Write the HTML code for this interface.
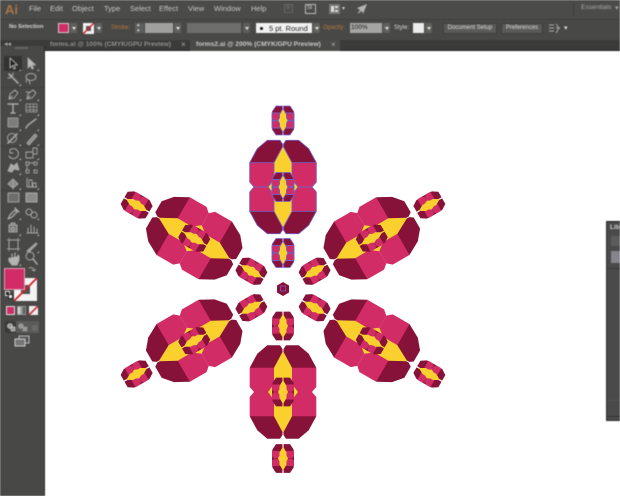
<!DOCTYPE html>
<html><head><meta charset="utf-8"><style>
html,body{margin:0;padding:0;width:620px;height:496px;overflow:hidden;background:#fff}
#r{position:relative;width:620px;height:496px;overflow:hidden;font-family:"Liberation Sans",sans-serif}
.a{position:absolute}
.t{position:absolute;white-space:nowrap;line-height:1;color:#cfcfcd}
.m{font-size:7.5px;top:5px;color:#c6c6c4}
.c{font-size:6px;top:25px;color:#d6d6d4}
.o{color:#b8793a;font-size:6px;top:25px}
.b{position:absolute;top:23px;height:10px}
.d{position:absolute;top:23px;height:10px;width:7px;background:#5f5f5d}
.d:after{content:"";position:absolute;left:2px;top:4px;border:2px solid transparent;border-top:3px solid #e4e4e4}
.btn{position:absolute;top:23px;height:9px;background:#5a5a58;border:1px solid #3e3e3c;color:#dcdcda;font-size:6px;line-height:9px;text-align:center;white-space:nowrap;box-sizing:content-box}
#chrome{filter:blur(.45px)}
#art{filter:blur(.3px)}
</style></head><body><div id="r">
<svg id="art" class="a" style="left:0;top:0" width="620" height="496" viewBox="0 0 620 496">
<defs>
<g id="q"><polygon fill="#871239" points="-33.3,-24.3 -25.7,-38.3 -15.7,-46.7 -3,-46.7 -.5,-43 -.5,-36 -7,-20 -20,-20"/><polygon fill="#d22c66" points="-33.3,-24.3 -8,-24.3 -8,-7 -13,0 -29,0 -33.3,-5"/></g>
<g id="mq"><polygon fill="#871239" points="-.6,-14.4 -7,-14.4 -10.6,-9 -11,0 -.6,0"/><polygon fill="#d22c66" points="-11,-7.5 -3,-7.5 -3,-1 -4,-.3 -9,-.3 -11,-2.5"/></g>
<g id="mini"><use href="#mq"/><use href="#mq" transform="scale(-1,1)"/><use href="#mq" transform="scale(1,-1)"/><use href="#mq" transform="scale(-1,-1)"/><polygon fill="#fad02e" points="0,-12 3.5,-6 3.5,-3 5,0 3.5,3 3.5,6 0,12 -3.5,6 -3.5,3 -5,0 -3.5,-3 -3.5,-6"/></g>
<g id="big"><use href="#q"/><use href="#q" transform="scale(-1,1)"/><use href="#q" transform="scale(1,-1)"/><use href="#q" transform="scale(-1,-1)"/><polygon fill="#fad02e" points="0,-41 9,-24.3 9,-8 15,0 9,8 9,24.3 0,41 -9,24.3 -9,8 -15,0 -9,-8 -9,-24.3"/><use href="#mini"/></g>
<g id="arm"><use href="#big" transform="translate(283,187)"/><use href="#mini" transform="translate(283,120.5)"/><use href="#mini" transform="translate(283,253)"/></g>
</defs>
<use href="#arm" transform="rotate(60 283 289.5)"/>
<use href="#arm" transform="rotate(120 283 289.5)"/>
<use href="#arm" transform="rotate(180 283 289.5)"/>
<use href="#arm" transform="rotate(240 283 289.5)"/>
<use href="#arm" transform="rotate(300 283 289.5)"/>
<g stroke="#7a5cc0" stroke-width=".9" stroke-linejoin="round"><use href="#arm"/></g>
<polygon fill="#871239" points="283,282 289,285.5 289,292.5 283,296 277,292.5 277,285.5"/>
<rect x="280.5" y="286" width="5" height="5" fill="none" stroke="#7a5cc0" stroke-width=".8"/>
</svg>

<div id="chrome">
<div class="a" style="left:0;top:0;width:620px;height:19px;background:#4b4b49"></div>
<div class="a" style="left:0;top:19px;width:620px;height:21px;background:#484846;border-top:1px solid #3f3f3d;box-sizing:border-box"></div>
<div class="a" style="left:0;top:40px;width:620px;height:11px;background:#3b3b39"></div>
<div class="a" style="left:45px;top:50px;width:575px;height:1px;background:#222"></div>
<div class="a" style="left:190px;top:40px;width:150px;height:11px;background:#4a4a48"></div>

<div class="t" style="left:5px;top:3px;font-size:13px;color:#a8764c;font-weight:bold">Ai</div>
<div class="t m" style="left:29px">File</div>
<div class="t m" style="left:50px">Edit</div>
<div class="t m" style="left:72px">Object</div>
<div class="t m" style="left:104px">Type</div>
<div class="t m" style="left:130px">Select</div>
<div class="t m" style="left:159px">Effect</div>
<div class="t m" style="left:188px">View</div>
<div class="t m" style="left:214px">Window</div>
<div class="t m" style="left:251px">Help</div>
<div class="a" style="left:284px;top:4px;width:9px;height:9px;border:1px solid #666;box-sizing:border-box"></div>
<div class="t" style="left:286px;top:6px;font-size:5px;color:#777">Br</div>
<div class="a" style="left:305px;top:4px;width:11px;height:10px;border:1px solid #bbb;box-sizing:border-box"></div>
<div class="t" style="left:307px;top:6px;font-size:5.5px;color:#ddd">St</div>
<div class="a" style="left:329px;top:4px;width:11px;height:10px;background:#777"></div>
<div class="a" style="left:331px;top:6px;width:3px;height:6px;background:#ddd"></div>
<div class="a" style="left:335px;top:6px;width:3px;height:2px;background:#ddd"></div>
<div class="a" style="left:335px;top:10px;width:3px;height:2px;background:#ddd"></div>
<div class="t" style="left:342px;top:6px;font-size:6px;color:#ccc">▾</div>
<svg class="a" style="left:354px;top:3px" width="14" height="13"><path d="M13 1L3 5l3 2-3 4 5-3 1 3z" fill="#b4b4b2"/></svg>
<div class="a" style="left:573px;top:2px;width:1px;height:14px;background:#3d3d3b"></div>
<div class="t" style="left:581px;top:5px;font-size:6.7px;color:#a9a9a7">Essentials</div>
<div class="t" style="left:615px;top:5px;font-size:7px;color:#aaa">▾</div>

<div class="t c" style="left:9px;font-weight:bold;font-size:5.7px">No Selection</div>
<div class="b" style="left:58px;width:11px;background:#d22c66;border:1px solid #ccc;box-sizing:border-box"></div>
<div class="d" style="left:70px"></div>
<svg class="a" style="left:83px;top:23px" width="11" height="11"><rect width="11" height="11" fill="#f2f2f2"/><rect x="3" y="3" width="5" height="5" fill="#555"/><path d="M0 11L11 0" stroke="#d2232a" stroke-width="1.500"/></svg>
<div class="d" style="left:95px"></div>
<div class="t o" style="left:111px">Stroke:</div>
<div class="b" style="left:135px;width:9px;background:#5f5f5d"></div>
<div class="t" style="left:137px;top:23px;font-size:5px;color:#ddd">▴</div>
<div class="t" style="left:137px;top:29px;font-size:5px;color:#ddd">▾</div>
<div class="b" style="left:145px;width:28px;background:#a0a09e"></div>
<div class="d" style="left:174px"></div>
<div class="b" style="left:187px;width:54px;background:#6e6e6c"></div>
<div class="d" style="left:243px;background:#5c5c5a"></div>
<div class="b" style="left:256px;width:56px;background:#f1f1f1"></div>
<div class="a" style="left:260px;top:27px;width:3px;height:3px;border-radius:50%;background:#111"></div>
<div class="t" style="left:269px;top:25px;font-size:7.5px;color:#222">5 pt. Round</div>
<div class="d" style="left:313px"></div>
<div class="t o" style="left:323px">Opacity:</div>
<div class="b" style="left:350px;width:32px;background:#a5a5a3"></div>
<div class="t" style="left:351px;top:25px;font-size:6.500px;color:#222">100%</div>
<div class="d" style="left:383px"></div>
<div class="t c" style="left:394px">Style:</div>
<div class="b" style="left:413px;width:11px;background:#ececec"></div>
<div class="d" style="left:425px"></div>
<div class="btn" style="left:443px;width:52px">Document Setup</div>
<div class="btn" style="left:501px;width:40px">Preferences</div>
<svg class="a" style="left:549px;top:23px" width="12" height="11" stroke="#aaa" fill="none"><path d="M0 2h5M0 5h5M0 8h5M7 1l3 4-3 5M7 5h4"/></svg>
<div class="t" style="left:564px;top:25px;font-size:7px;color:#ddd">▾</div>

<div class="t" style="left:4px;top:41px;font-size:7px;color:#aaa">◂◂</div>
<div class="t" style="left:50px;top:42px;font-size:6.6px;color:#8f8f8d;font-weight:bold">forms.ai @ 100% (CMYK/GPU Preview)</div>
<div class="t" style="left:181px;top:41px;font-size:8px;color:#aaa">×</div>
<div class="t" style="left:196px;top:42px;font-size:6.6px;color:#c9c9c7;font-weight:bold">forms2.ai @ 200% (CMYK/GPU Preview)</div>
<div class="t" style="left:331px;top:41px;font-size:8px;color:#aaa">×</div>

<div class="a" style="left:0;top:51px;width:44px;height:445px;background:#484846"></div>
<div class="a" style="left:0;top:46px;width:44px;height:5px;background:#484846"></div>
<div class="a" style="left:44px;top:46px;width:1px;height:450px;background:#2c2c2a"></div>
<div class="a" style="left:15px;top:47px;width:13px;height:2px;background:#666"></div>
<div class="a" style="left:4px;top:56px;width:18px;height:15px;background:#333331"></div>

<svg class="a" style="left:0;top:50px" width="44" height="310" viewBox="0 50 44 310" fill="none" stroke="#a8a8a6" stroke-width="1" stroke-linejoin="round" stroke-linecap="round">
<path d="M10 58v10l2.500-2.500 1.500 3.500 1.500-.7-1.500-3.300h3.500z" fill="#222"/>
<path d="M28 58v10l2.500-2.500 1.500 3.500 1.500-.7-1.500-3.300h3.500z" fill="#bbb"/>
<path d="M9 74l3 2-1 1zM12 77l6 6" stroke-width="1.600"/><path d="M8 78h2M13 73v2"/>
<ellipse cx="31" cy="77" rx="5" ry="3.500"/><path d="M29 80l1 4M27 79l-1 3"/>
<path d="M9 99l1-5 5-4 3 3-4 5zM9 99l3-3"/><path d="M27 99l1-5 5-4 3 3-4 5zM27 99l3-3M26 92h3"/>
<path d="M8 104h10M13 104v9M11 113h4" stroke-width="1.500"/>
<path d="M26 104h11v8H26zM26 107h11M26 110h11M30 104v8M33.500 104v8" stroke-width=".7"/>
<rect x="8" y="118" width="10" height="9" fill="#7d7d7b" stroke="#999"/>
<path d="M26 128l2-3 8-6" stroke-width="1.500"/>
<circle cx="12" cy="138" r="4.500"/><path d="M8 143l9-9" stroke-width="1.600"/>
<path d="M27 143l8-9 2 2-8 9z" fill="#888"/>
<path d="M10 150a5 5 0 1 1-1 6M10 150v3h3"/>
<path d="M26 152h7v6h-7zM33 148h4v6h-4z" stroke-width=".9"/>
<path d="M8 171l3-7 3 2 3-3 2 7-5-1-2 3z" fill="#aaa"/>
<path d="M26 162h3v3h-3zM34 162h3v3h-3zM26 170h3v3h-3zM34 170h3v3h-3zM29 163h5M27 165v5" stroke-dasharray="1.500 1"/>
<path d="M8 184l5-5 5 5-5 4zM13 182v7" fill="#888"/>
<path d="M27 178v9h10M29 187v-7h3v7M33 187v-4h3v4" stroke-width=".9"/>
<rect x="8" y="193" width="11" height="9" fill="#6d6d6b" stroke="#aaa" stroke-dasharray="1.500 1"/>
<rect x="26" y="193" width="11" height="9" fill="#8a8a88" stroke="#aaa"/>
<path d="M8 219l2-4 5-5 2 2-5 5zM15 208l4 4" stroke-width="1.300"/>
<circle cx="29" cy="212" r="3"/><circle cx="34" cy="215" r="3"/>
<path d="M9 232v-7h8v7zM11 225v-2h4v2" fill="#777"/><circle cx="13" cy="229" r="1.500"/>
<path d="M27 233h11M28 233v-5M31 233v-8M34 233v-6M37 233v-4" stroke-width="1"/>
<rect x="9" y="240" width="9" height="9"/><path d="M7 240h2M7 249h2M18 240h2M18 249h2M9 238v2M18 238v2M9 249v2M18 249v2" stroke-width=".7"/>
<path d="M27 251l9-8 1 1-8 8z" fill="#999"/>
<path d="M9 258v3l3 4h5l2-5v-4M12 258v-4M15 257v-4M18 258v-3" fill="#b5b5b3" stroke-width="1.200"/>
<circle cx="30" cy="256" r="4"/><path d="M33 259l4 5" stroke-width="1.600"/>
<path d="M29 268c3-1 5 0 5 3M34 271l-2-1M34 271l1.500-1.500" stroke-width=".9"/>
</svg>
<svg class="a" style="left:0;top:50px" width="44" height="230" viewBox="0 50 44 230" fill="#bbb">
<path d="M21 69v2h-2zM39 69v2h-2zM21 84v2h-2zM21 99v2h-2zM39 99v2h-2zM21 114v2h-2zM39 114v2h-2zM21 129v2h-2zM39 129v2h-2zM21 144v2h-2zM39 144v2h-2zM21 158v2h-2zM39 158v2h-2zM21 173v2h-2zM21 188v2h-2zM39 188v2h-2zM21 218v2h-2zM39 218v2h-2zM21 234v2h-2zM39 234v2h-2zM39 251v2h-2zM21 264v2h-2z"/>
</svg>
<div class="a" style="left:0;top:87px;width:44px;height:1px;background:#3f3f3d"></div>
<div class="a" style="left:0;top:146px;width:44px;height:1px;background:#3f3f3d"></div>
<div class="a" style="left:0;top:190px;width:44px;height:1px;background:#3f3f3d"></div>

<svg class="a" style="left:14px;top:278px" width="23" height="23"><rect x="0" y="0" width="23" height="23" fill="#f4f4f4"/><rect x="7" y="7" width="9" height="9" fill="#505050"/><path d="M0 23L23 0" stroke="#d2232a" stroke-width="1.800"/></svg>
<div class="a" style="left:4px;top:268px;width:21px;height:22px;background:#d22c66;border:1px solid #d9a0b6;box-sizing:border-box"></div>
<div class="a" style="left:5px;top:291px;width:5px;height:5px;background:#222;border:1px solid #ddd;box-sizing:border-box"></div>
<div class="a" style="left:8px;top:294px;width:5px;height:5px;background:#eee;border:1px solid #222;box-sizing:border-box"></div>

<div class="a" style="left:6px;top:306px;width:9px;height:9px;background:#d22c66;border:1px solid #ddd;box-sizing:border-box"></div>
<div class="a" style="left:17px;top:306px;width:9px;height:9px;background:linear-gradient(90deg,#eee,#444);border:1px solid #999;box-sizing:border-box"></div>
<svg class="a" style="left:29px;top:306px" width="9" height="9"><rect width="9" height="9" fill="#eee"/><path d="M0 9L9 0" stroke="#d2232a" stroke-width="1.600"/></svg>

<div class="a" style="left:5px;top:321px;width:34px;height:12px;background:#5b5b59"></div>
<div class="a" style="left:5px;top:321px;width:11px;height:12px;background:#3a3a38"></div>
<svg class="a" style="left:5px;top:321px" width="34" height="12" fill="#999" stroke="#ddd" stroke-width=".6"><circle cx="5" cy="5" r="2.500"/><rect x="6" y="6" width="4" height="4"/><circle cx="16" cy="5" r="2.500" stroke="#999"/><rect x="18" y="6" width="4" height="4" stroke="#999"/><rect x="28" y="5" width="4" height="4" fill="#666" stroke="#777"/></svg>
<svg class="a" style="left:14px;top:335px" width="16" height="12"><rect x="5" y="1" width="10" height="7" fill="#555" stroke="#bbb"/><rect x="1" y="4" width="10" height="7" fill="#777" stroke="#ccc"/></svg>

<div class="a" style="left:606px;top:221px;width:14px;height:200px;background:#4a4a4a;border-top:1px solid #1f1f1f;border-left:1px solid #2f2f2f;border-bottom:1px solid #2a2a2a;box-sizing:border-box"></div>
<div class="t" style="left:610px;top:225px;font-size:6.500px;color:#ccc;font-weight:bold">Libr</div>
<div class="a" style="left:611px;top:236px;width:9px;height:10px;background:#5c5c5c"></div>
<div class="a" style="left:611px;top:251px;width:9px;height:12px;background:#85858d"></div>
<div class="a" style="left:607px;top:268px;width:13px;height:1px;background:#383838"></div>
<div class="a" style="left:607px;top:400px;width:13px;height:1px;background:#555"></div>
<div class="a" style="left:607px;top:416px;width:13px;height:1px;background:#333"></div>
</div>
</div></body></html>
